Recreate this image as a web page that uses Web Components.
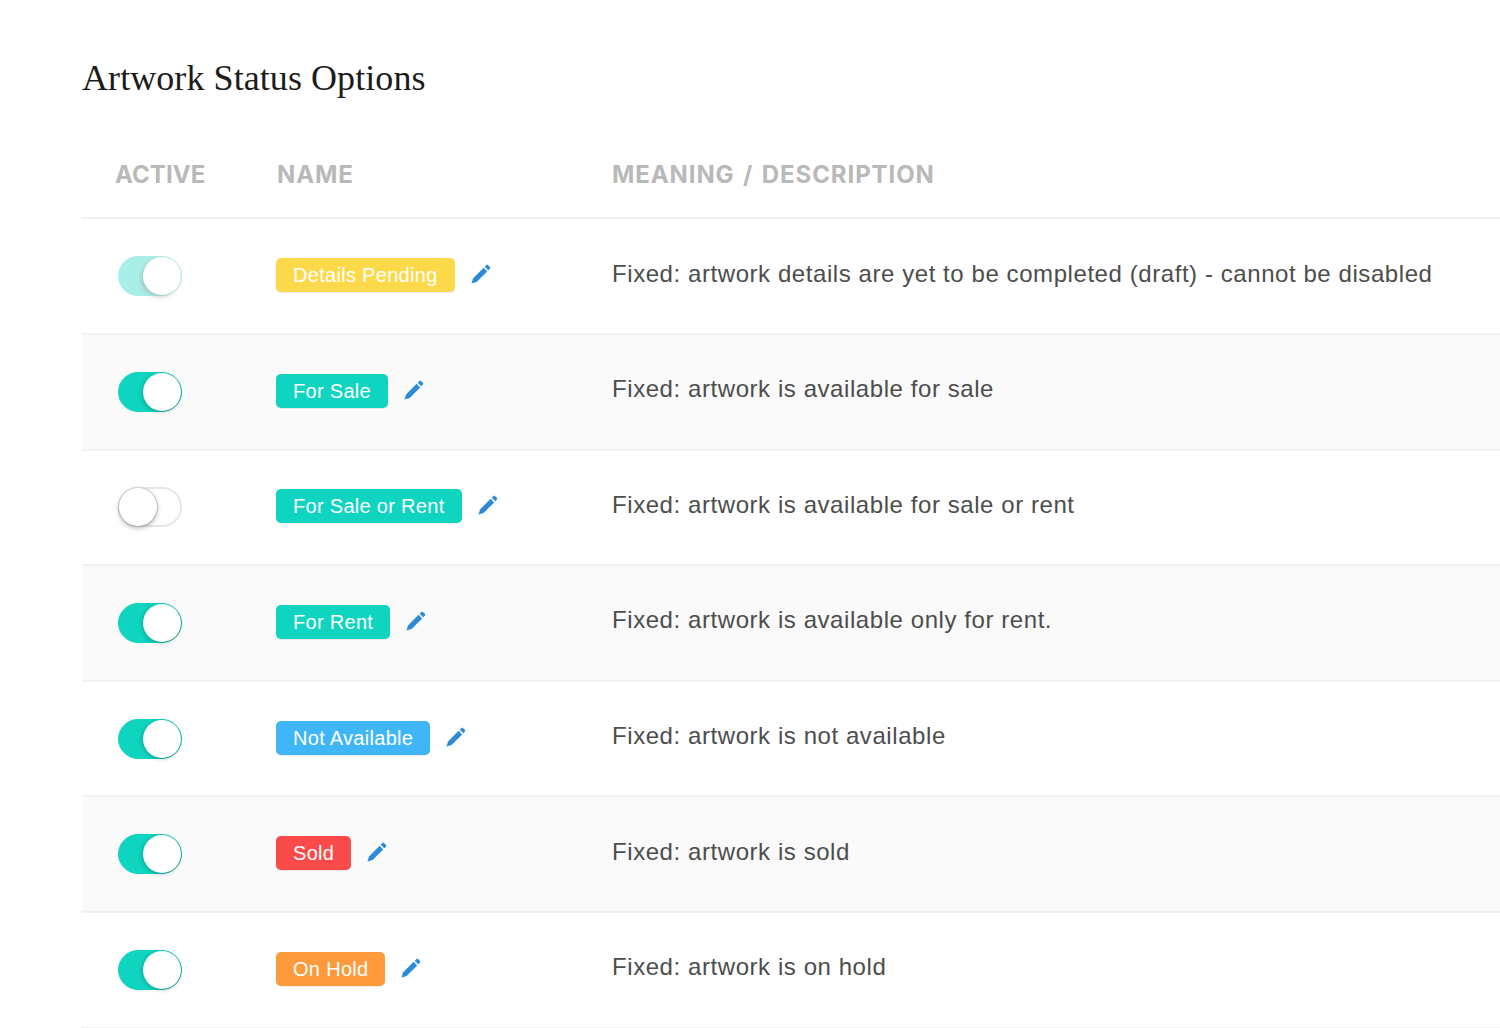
<!DOCTYPE html>
<html>
<head>
<meta charset="utf-8">
<title>Artwork Status Options</title>
<style>
    html, body { margin: 0; padding: 0; background: #fff; overflow: hidden; }
</style>
</head>
<body>
<status-page>
    <status-row state="dim" tag="Details Pending" color="#fcd94a" text="Fixed: artwork details are yet to be completed (draft) - cannot be disabled"></status-row>
    <status-row state="on" tag="For Sale" color="#0fd5c0" text="Fixed: artwork is available for sale" shade></status-row>
    <status-row state="off" tag="For Sale or Rent" color="#0fd5c0" text="Fixed: artwork is available for sale or rent"></status-row>
    <status-row state="on" tag="For Rent" color="#0fd5c0" text="Fixed: artwork is available only for rent." shade></status-row>
    <status-row state="on" tag="Not Available" color="#3fb6f7" text="Fixed: artwork is not available"></status-row>
    <status-row state="on" tag="Sold" color="#fb4a4a" text="Fixed: artwork is sold" shade></status-row>
    <status-row state="on" tag="On Hold" color="#fc9a3c" text="Fixed: artwork is on hold"></status-row>
</status-page>

<script>
class StatusToggle extends HTMLElement {
    connectedCallback() {
        this.shadow = this.attachShadow({mode: 'open'});
        this.shadow.innerHTML = `
<style>
    :host { display: block; width: 64px; height: 40px; }
    .track {
        box-sizing: border-box;
        display: flex;
        justify-content: flex-end;
        width: 64px;
        height: 40px;
        border-radius: 20px;
        background: #0fd5c0;
        border: 1px solid #0fd5c0;
    }
    .knob {
        width: 38px;
        height: 38px;
        border-radius: 50%;
        background: #fff;
        box-shadow: -1px 1px 4px rgba(0, 0, 0, 0.22), 0.5px 0.5px 0 rgba(0, 90, 80, 0.35);
    }
    .dim { opacity: 0.36; }
    .dim .knob { box-shadow: -2px 2px 4px rgba(0, 0, 0, 0.5); }
    .off { background: #fff; border: 2px solid #e6e6e6; justify-content: flex-start; }
    .off .knob { margin: -1px 0 0 -1px; box-shadow: 0 2px 5px rgba(0, 0, 0, 0.3), 0 0 0 1px #d9d9d9; }
</style>
<div class="track ${this.getAttribute('state')}"><div class="knob"></div></div>
        `;
    }
}
customElements.define('status-toggle', StatusToggle);

class StatusTag extends HTMLElement {
    connectedCallback() {
        this.shadow = this.attachShadow({mode: 'open'});
        this.shadow.innerHTML = `
<style>
    :host {
        display: block;
        height: 34px;
        padding: 0 17px;
        border-radius: 5px;
        background: var(--tag-color);
        color: #fff;
        font: 20px/34px "Liberation Sans", Arial, sans-serif;
        letter-spacing: 0.3px;
        white-space: nowrap;
        box-shadow: 0 1px 1px rgba(0, 0, 0, 0.08);
    }
</style>
<slot></slot>
        `;
    }
}
customElements.define('status-tag', StatusTag);

class EditIcon extends HTMLElement {
    connectedCallback() {
        this.shadow = this.attachShadow({mode: 'open'});
        this.shadow.innerHTML = `
<style>
    :host { display: block; width: 20px; height: 20px; }
    svg { display: block; }
</style>
<svg width="20" height="20" viewBox="0 0 20 20" fill="#2b8bd8">
    <path d="M0.5 19.5 L2 14.4 L12.6 3.8 L16.2 7.4 L5.6 18 Z"/>
    <path d="M13.7 2.7 L15.2 1.2 C15.8 0.6 16.6 0.6 17.2 1.2 L18.8 2.8 C19.4 3.4 19.4 4.2 18.8 4.8 L17.3 6.3 Z"/>
</svg>
        `;
    }
}
customElements.define('edit-icon', EditIcon);

class StatusRow extends HTMLElement {
    connectedCallback() {
        this.shadow = this.attachShadow({mode: 'open'});
        let color = this.getAttribute('color');
        this.shadow.innerHTML = `
<style>
    :host {
        display: grid;
        grid-template-columns: 194px 336px 1fr;
        align-items: center;
        box-sizing: border-box;
        height: 115.6px;
        border-bottom: 2px solid #f1f1f1;
    }
    :host([shade]) { background: #fafafa; }
    status-toggle { margin-left: 36px; }
    .name { display: flex; align-items: center; gap: 16px; }
    .name status-tag { margin-top: -2px; }
    .name edit-icon { margin-top: -4px; }
    .text {
        color: #4d4d4d;
        font: 24px/30px "Liberation Sans", Arial, sans-serif;
        letter-spacing: 0.57px;
        white-space: nowrap;
        margin-top: -5px;
    }
</style>
<status-toggle state="${this.getAttribute('state')}"></status-toggle>
<div class="name">
    <status-tag style="--tag-color: ${color}">${this.getAttribute('tag')}</status-tag>
    <edit-icon></edit-icon>
</div>
<div class="text">${this.getAttribute('text')}</div>
        `;
    }
}
customElements.define('status-row', StatusRow);

class StatusPage extends HTMLElement {
    connectedCallback() {
        this.shadow = this.attachShadow({mode: 'open'});
        this.shadow.innerHTML = `
<style>
    :host { display: block; padding: 56px 0 0 82px; height: 1028px; box-sizing: border-box; }
    h1 {
        margin: 0;
        height: 45px;
        color: #1c1c1c;
        font: 400 36px/44px "Liberation Serif", "Times New Roman", serif;
        letter-spacing: 0.07px;
    }
    .head {
        display: grid;
        grid-template-columns: 194px 336px 1fr;
        box-sizing: border-box;
        align-items: center;
        height: 118.4px;
        padding-top: 31px;
        border-bottom: 2px solid #f1f1f1;
        color: #b9b9b9;
        font: 700 24px/30px Inter, "Liberation Sans", sans-serif;
    }
    .active { padding-left: 33px; letter-spacing: 0.1px; }
    .name { padding-left: 1px; letter-spacing: 0.9px; }
    .meaning { letter-spacing: 0.9px; word-spacing: 2px; }
</style>
<h1>Artwork Status Options</h1>
<div class="head"><span class="active">ACTIVE</span><span class="name">NAME</span><span class="meaning">MEANING / DESCRIPTION</span></div>
<slot></slot>
        `;
    }
}
customElements.define('status-page', StatusPage);
</script>
</body>
</html>
